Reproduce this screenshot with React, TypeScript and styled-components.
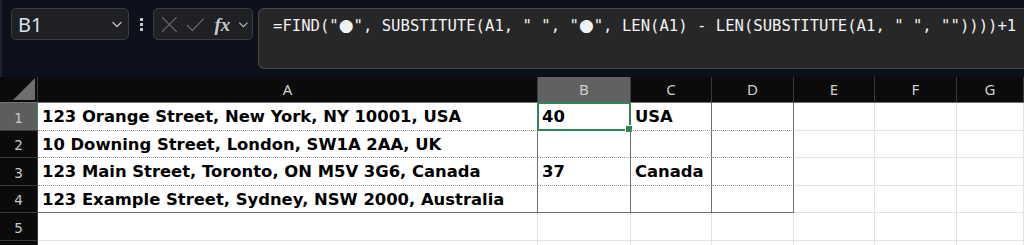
import React from 'react';
import styled, { createGlobalStyle, css } from 'styled-components';

const GlobalStyle = createGlobalStyle`
  html, body {
    margin: 0;
    padding: 0;
    background: #ffffff;
    overflow: hidden;
  }
  #root {
    width: 1024px;
    height: 245px;
    overflow: hidden;
  }
`;

const COLUMNS = ['A', 'B', 'C', 'D', 'E', 'F', 'G'];
const DATA_COLS = 4;
const DATA_ROWS = 4;
const ROW_COUNT = 6;

const ROWS: string[][] = [
  ['123 Orange Street, New York, NY 10001, USA', '40', 'USA'],
  ['10 Downing Street, London, SW1A 2AA, UK', '', ''],
  ['123 Main Street, Toronto, ON M5V 3G6, Canada', '37', 'Canada'],
  ['123 Example Street, Sydney, NSW 2000, Australia', '', ''],
];

const FORMULA = '=FIND("●", SUBSTITUTE(A1, " ", "●", LEN(A1) - LEN(SUBSTITUTE(A1, " ", ""))))+1';

const TopBar = styled.div`
  height: 77px;
  background: #0b101b;
  display: flex;
  align-items: flex-start;
  padding: 8px 0 0 9px;
  box-sizing: border-box;
  border-left: 2px solid #1c212b;
`;

const NameBox = styled.div`
  width: 118px;
  height: 32px;
  box-sizing: border-box;
  background: #1f2024;
  border: 1px solid #3b3d42;
  border-radius: 5px;
  display: flex;
  align-items: center;
  justify-content: space-between;
  padding: 0 5px 0 6px;
  font-family: 'Noto Sans', 'DejaVu Sans', sans-serif;
  font-size: 20px;
  color: #d9e2ee;
`;

const Dots = styled.div`
  width: 24px;
  height: 32px;
  display: flex;
  flex-direction: column;
  align-items: center;
  justify-content: center;
  gap: 2px;
  & > span {
    width: 3px;
    height: 3px;
    background: #c4c4c4;
  }
`;

const FuncBox = styled.div`
  width: 100px;
  height: 32px;
  box-sizing: border-box;
  background: #1f2024;
  border: 1px solid #3b3d42;
  border-radius: 5px;
  display: flex;
  align-items: center;
  padding: 0 3px 0 7px;
  gap: 8px;
`;

const Fx = styled.span`
  font-family: 'Liberation Serif', 'DejaVu Serif', serif;
  font-style: italic;
  font-weight: bold;
  font-size: 19px;
  color: #c8c8c8;
  margin-left: 2px;
  line-height: 1;
`;

const FormulaBox = styled.div`
  margin-left: 5px;
  flex: 1;
  height: 61px;
  box-sizing: border-box;
  background: #272727;
  border: 1px solid #464646;
  border-right: none;
  border-radius: 6px 0 0 6px;
  padding: 8px 0 0 14px;
  font-family: 'DejaVu Sans Mono', 'Liberation Mono', monospace;
  font-size: 15.6px;
  color: #f2f2f2;
  white-space: nowrap;
  overflow: hidden;
`;

const Bullet = styled.span`
  font-family: 'DejaVu Sans', sans-serif;
  font-size: 17px;
  line-height: 1;
`;

const Sheet = styled.div`
  display: grid;
  grid-template-columns: 38px 500px 93px 81px 82px 81px 82px 1fr;
  grid-template-rows: 26px repeat(${ROW_COUNT}, 27.5px);
  background: #ffffff;
`;

const Corner = styled.div`
  background: #0b0b0b;
  border-right: 1px solid #3a3a3a;
  border-bottom: 1px solid #727272;
  box-sizing: border-box;
  display: flex;
  align-items: flex-end;
  justify-content: flex-end;
  padding: 0 2px 2px 0;
`;

const ColHeader = styled.div<{ $active?: boolean }>`
  background: ${p => (p.$active ? '#616161' : '#0b0b0b')};
  border-right: 1px solid #3a3a3a;
  border-bottom: 1px solid ${p => (p.$active ? '#616161' : '#727272')};
  box-sizing: border-box;
  display: flex;
  align-items: center;
  justify-content: center;
  font-family: 'Noto Sans', 'DejaVu Sans', sans-serif;
  font-size: 15px;
  color: #cfcfcf;
  padding-bottom: 2px;
`;

const RowHeader = styled.div<{ $active?: boolean }>`
  background: ${p => (p.$active ? '#5d5d5d' : '#0b0b0b')};
  border-right: 1px solid ${p => (p.$active ? '#2e8a57' : '#3a3a3a')};
  border-bottom: 1px solid #3a3a3a;
  box-sizing: border-box;
  display: flex;
  align-items: center;
  justify-content: center;
  font-family: 'DejaVu Sans', sans-serif;
  font-size: 13.5px;
  color: #c9c9c9;
  padding-top: 3px;
`;

const Cell = styled.div<{ $data?: boolean; $lastDataRow?: boolean }>`
  position: relative;
  box-sizing: border-box;
  border-right: 1px solid #e3e3e3;
  border-bottom: 1px solid #e3e3e3;
  font-family: 'DejaVu Sans', 'Noto Sans', sans-serif;
  font-weight: bold;
  font-size: 16.4px;
  line-height: 24px;
  color: #000000;
  padding: 2px 0 0 4px;
  white-space: nowrap;
  ${p =>
    p.$data &&
    css`
      border-right-color: #6f6f6f;
      border-bottom: 1px dotted #9a9a9a;
    `}
  ${p =>
    p.$lastDataRow &&
    css`
      border-bottom: 1px solid #6f6f6f;
    `}
`;

const Selection = styled.div`
  position: absolute;
  left: -1px;
  top: -1px;
  right: -1px;
  bottom: -1px;
  border: 2px solid #2f8556;
  pointer-events: none;
  &::after {
    content: '';
    position: absolute;
    right: -4px;
    bottom: -4px;
    width: 6px;
    height: 6px;
    background: #2f8556;
    border: 1px solid #ffffff;
  }
`;

const Chevron = ({ color = '#bdbdbd', size = 12 }: { color?: string; size?: number }) => (
  <svg width={size} height={size} viewBox="0 0 12 12">
    <path d="M1.5 4 L6 8.5 L10.5 4" fill="none" stroke={color} strokeWidth="1.3" />
  </svg>
);

const CrossIcon = () => (
  <svg width="17" height="17" viewBox="0 0 17 17">
    <path d="M1 1 L16 16 M16 1 L1 16" stroke="#6b6b6b" strokeWidth="1.3" fill="none" />
  </svg>
);

const CheckIcon = () => (
  <svg width="19" height="15" viewBox="0 0 19 15">
    <path d="M1 8 L6.5 13.5 L18 1.5" stroke="#6b6b6b" strokeWidth="1.3" fill="none" />
  </svg>
);

const CornerTriangle = () => (
  <svg width="22" height="22" viewBox="0 0 22 22">
    <path d="M22 0 L22 22 L0 22 Z" fill="#6e6e6e" />
  </svg>
);

const FormulaText = ({ text }: { text: string }) => (
  <>
    {text.split('●').map((part, i) => (
      <React.Fragment key={i}>
        {i > 0 ? <Bullet>●</Bullet> : null}
        {part}
      </React.Fragment>
    ))}
  </>
);

const App = () => {
  const rowIndexes = Array.from({ length: ROW_COUNT }, (_, i) => i);
  return (
    <>
      <GlobalStyle />
      <TopBar>
        <NameBox>
          <span>B1</span>
          <Chevron />
        </NameBox>
        <Dots>
          <span />
          <span />
          <span />
        </Dots>
        <FuncBox>
          <CrossIcon />
          <CheckIcon />
          <Fx>fx</Fx>
          <Chevron size={11} />
        </FuncBox>
        <FormulaBox>
          <FormulaText text={FORMULA} />
        </FormulaBox>
      </TopBar>
      <Sheet>
        <Corner>
          <CornerTriangle />
        </Corner>
        {COLUMNS.map(c => (
          <ColHeader key={c} $active={c === 'B'}>
            {c}
          </ColHeader>
        ))}
        {rowIndexes.map(r => (
          <React.Fragment key={r}>
            <RowHeader $active={r === 0}>{r < 5 ? r + 1 : ''}</RowHeader>
            {COLUMNS.map((c, ci) => {
              const inData = r < DATA_ROWS && ci < DATA_COLS;
              const text = inData ? ROWS[r][ci] ?? '' : '';
              return (
                <Cell key={c} $data={inData} $lastDataRow={inData && r === DATA_ROWS - 1}>
                  {text}
                  {r === 0 && c === 'B' ? <Selection /> : null}
                </Cell>
              );
            })}
          </React.Fragment>
        ))}
      </Sheet>
    </>
  );
};

export default App;
